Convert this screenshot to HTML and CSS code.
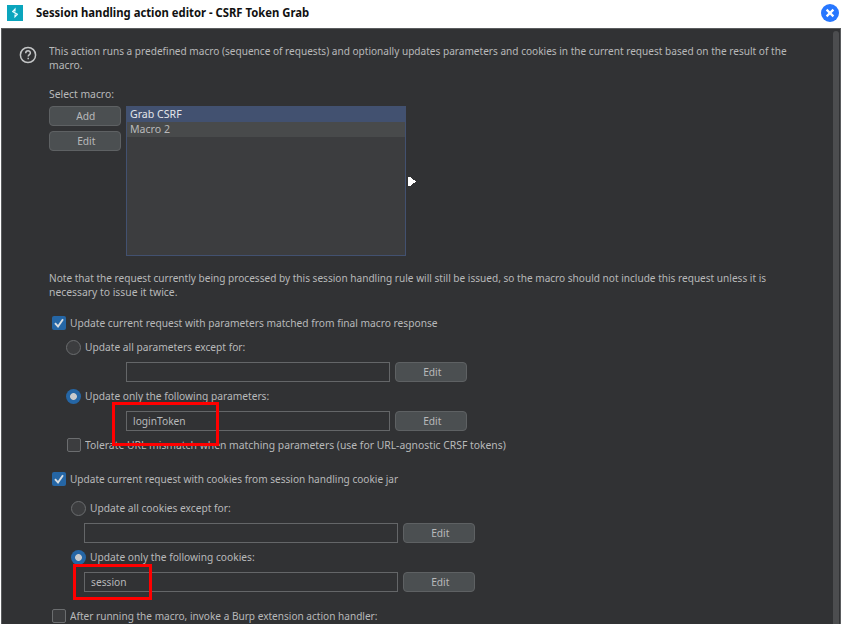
FILE: index.html
```html
<!DOCTYPE html>
<html lang="en">
<head>
<meta charset="utf-8">
<title>Session handling action editor</title>
<link rel="stylesheet" href="styles.css">
</head>
<body>
<header class="titlebar">
  <svg class="logo" width="16" height="16" viewBox="0 0 16 16"><rect width="16" height="16" fill="#0aa5bd"/><path d="M8.6 2.6V6.4H5L8.6 2.6M7.4 13.2V9.5H11L7.4 13.2" fill="#e8fbff"/><path d="M5.2 6.2L10.8 9.6" stroke="#e8fbff" stroke-width="1.3"/></svg>
  <h1 class="title">Session handling action editor - CSRF Token Grab</h1>
  <svg class="close" width="18" height="18" viewBox="0 0 18 18"><circle cx="9" cy="9" r="9" fill="#2777ff"/><path d="M5.6 5.6l6.8 6.8M12.4 5.6l-6.8 6.8" stroke="#fff" stroke-width="2.2"/></svg>
</header>
<main class="panel">
  <div class="content">
    <section class="intro">
      <svg class="help" width="18" height="18" viewBox="0 0 18 18" fill="none" stroke="#c3c5c6" stroke-width="1.5"><circle cx="9" cy="9" r="7.6"/><path d="M6.7 7.2c0-3.2 4.7-3 4.7-.3 0 1.7-2.2 1.7-2.2 3.5M9.2 11.8v1.5"/></svg>
      <p class="text"><span class="t narrow">This action runs a predefined macro (sequence of requests) and optionally updates parameters and cookies in the current request based on the result of the</span><span class="t wide">macro.</span></p>
    </section>
    <p class="text select-label"><span class="t wide">Select macro:</span></p>
    <section class="macros">
      <div class="actions"><button class="btn"><span class="t">Add</span></button><button class="btn"><span class="t">Edit</span></button></div>
      <ul class="list"><li class="item selected"><span class="t">Grab CSRF</span></li><li class="item alt"><span class="t">Macro 2</span></li></ul>
      <svg class="arrow" width="8" height="9" viewBox="0 0 8 9" shape-rendering="crispEdges"><path d="M0 0h2l6 4.5L2 9H0z" fill="#fff"/></svg>
    </section>
    <p class="text note"><span class="t narrow">Note that the request currently being processed by this session handling rule will still be issued, so the macro should not include this request unless it is</span><span class="t wide">necessary to issue it twice.</span></p>

    <section class="group params">
      <label class="row top"><span class="check on"><svg width="14" height="14" viewBox="0 0 14 14"><path d="M3 7.2l3 3.3L11 3.2" fill="none" stroke="#d8dde1" stroke-width="1.9"/></svg></span><span class="t">Update current request with parameters matched from final macro response</span></label>
      <label class="row"><span class="radio"></span><span class="t">Update all parameters except for:</span></label>
      <div class="entry"><div class="field"></div><button class="btn"><span class="t">Edit</span></button></div>
      <label class="row"><span class="radio on"></span><span class="t">Update only the following parameters:</span></label>
      <div class="entry"><div class="field"><span class="t">loginToken</span><i class="mark mark-token"></i></div><button class="btn"><span class="t">Edit</span></button></div>
      <label class="row tolerate"><span class="check"></span><span class="t wide">Tolerate URL mismatch when matching parameters (use for URL-agnostic CRSF tokens)</span></label>
    </section>

    <section class="group cookies">
      <label class="row top"><span class="check on"><svg width="14" height="14" viewBox="0 0 14 14"><path d="M3 7.2l3 3.3L11 3.2" fill="none" stroke="#d8dde1" stroke-width="1.9"/></svg></span><span class="t narrow">Update current request with cookies from session handling cookie jar</span></label>
      <label class="row"><span class="radio"></span><span class="t">Update all cookies except for:</span></label>
      <div class="entry"><div class="field"></div><button class="btn"><span class="t">Edit</span></button></div>
      <label class="row"><span class="radio on"></span><span class="t">Update only the following cookies:</span></label>
      <div class="entry"><div class="field"><span class="t">session</span><i class="mark mark-session"></i></div><button class="btn"><span class="t">Edit</span></button></div>
    </section>

    <label class="row top last"><span class="check"></span><span class="t narrow">After running the macro, invoke a Burp extension action handler:</span></label>
  </div>
  <div class="scrollbar"></div>
</main>
</body>
</html>
```
FILE: styles.css
```css
* { box-sizing: border-box; margin: 0; padding: 0; }
body {
  width: 841px; height: 624px; overflow: hidden; background: #fff;
  font: 11.5px/14px "Noto Sans", sans-serif; letter-spacing: 0; color: #b8b9ba;
}
svg { display: block; flex: none; }
/* condensed interface text */
.t { display: block; width: max-content; transform: scaleX(.887); transform-origin: 0 50%; }
.wide { transform: scaleX(.9); }
.narrow { transform: scaleX(.876); }
.titlebar { display: flex; align-items: center; height: 28px; padding: 0 2px 2px 7px; }
.title { width: max-content; margin: 0 auto 0 13px; font-size: 12px; font-weight: 700; line-height: 16px; color: #111; transform: scaleX(.94); transform-origin: 0 50%; }
.panel {
  display: flex; justify-content: space-between; height: 596px; margin-left: 1px; overflow: hidden;
  background: #313234; border: 1px solid #5a5c5e; border-bottom: 0;
}
.content { width: 800px; padding: 15px 0 0 47px; white-space: nowrap; }
.intro { display: flex; margin-left: -30px; }
.help { margin: 2px 12px 0 0; }
.select-label { margin-top: 15px; }
.macros { display: flex; height: 150px; margin-top: 5px; }
.actions { display: flex; flex-direction: column; gap: 5px; margin-right: 5px; }
.btn {
  display: flex; justify-content: center; flex: none; width: 72px; height: 20px; padding-left: 2px; background: #4b4f51; border: 1px solid #5e6163;
  border-radius: 4px; font: inherit; line-height: 18px; color: #b8b9ba;
}
.btn .t { transform-origin: 50% 50%; }
.list { width: 280px; border: 1px solid #425170; background: #3c3d3f; list-style: none; }
.item { height: 15px; padding-left: 3px; line-height: 14px; }
.item .t { transform: scaleX(.92); }
.selected { background: #425170; color: #e4e6ea; }
.alt { background: #484a4b; }
.arrow { margin: 71px 0 0 2px; }
.note { margin-top: 15px; }
.row { display: flex; align-items: flex-start; gap: 4px; height: 15px; }
.top { margin-left: 3px; }
.check {
  flex: none; width: 14px; height: 14px; background: #3c3d3f; border: 1px solid #6b6d6f; border-radius: 2px;
}
.check.on { background: #2566a5; border: 0; }
.radio { flex: none; width: 15px; height: 15px; border: 1px solid #6b6d6f; border-radius: 50%; background: #3c3d3f; }
.radio.on { background: radial-gradient(circle, #c8cacc 3px, #2566a5 3.8px); border: 0; }
.entry { display: flex; gap: 5px; height: 20px; }
.field { position: relative; height: 20px; padding-left: 6px; border: 1px solid #646668; line-height: 18px; }
.params { margin-top: 17px; }
.params .row:not(.top) { margin-left: 17px; }
.params .row:nth-child(2) { margin-top: 9px; }
.params .tolerate.row { margin-left: 18px; }
.params .entry { margin: 7px 0 7px 77px; }
.params .field { width: 264px; }
.cookies { margin-top: 19px; }
.cookies .row:not(.top) { margin-left: 22px; }
.cookies .row:nth-child(2) { margin-top: 14px; }
.cookies .entry { margin: 7px 0 7px 35px; }
.cookies .field { width: 314px; }
.last { margin-top: 17px; }
.mark { position: absolute; z-index: 1; border: 3px solid #f00; }
.mark-token { left: -15px; top: -10px; width: 107px; height: 44px; }
.mark-session { left: -12px; top: -9px; width: 79px; height: 36px; }
.scrollbar { width: 6px; height: 600px; margin: 2px 1px 0 0; flex: none; border-radius: 3px 3px 0 0; background: #4c4d4f; }
```
